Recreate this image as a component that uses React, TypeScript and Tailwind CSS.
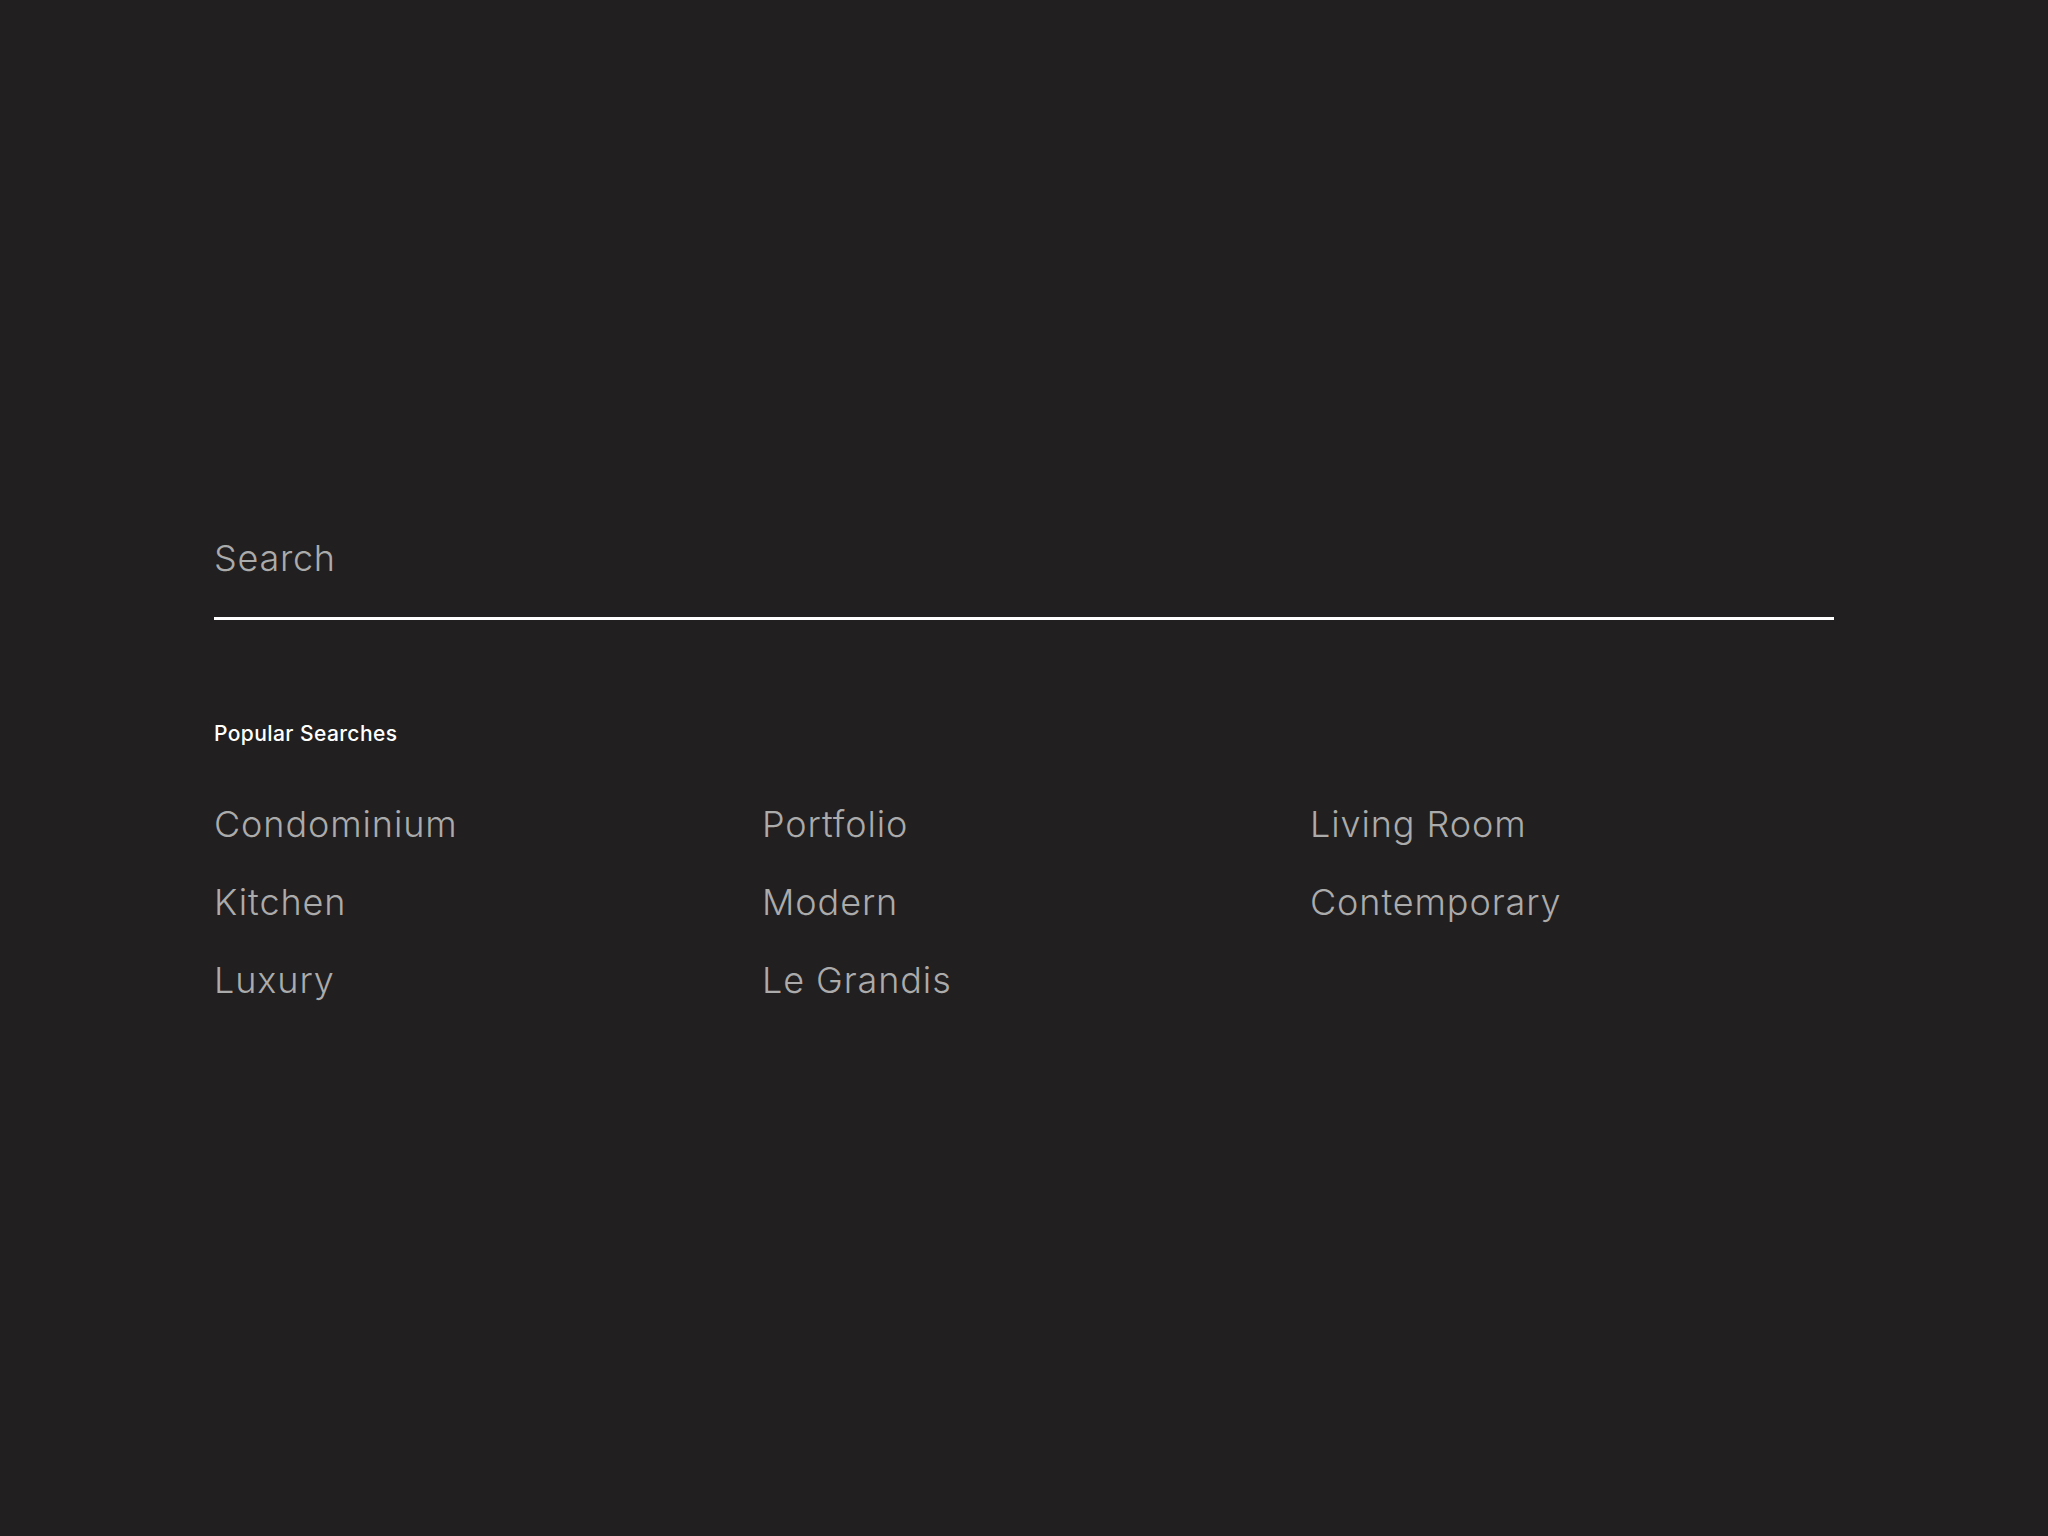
import React from "react";

const items = [
  "Condominium",
  "Portfolio",
  "Living Room",
  "Kitchen",
  "Modern",
  "Contemporary",
  "Luxury",
  "Le Grandis",
];

export default function App() {
  return (
    <div
      className="min-h-[1536px] w-full bg-[#221f20]"
      style={{ fontFamily: "Inter, 'Noto Sans', sans-serif" }}
    >
      <div className="mx-auto w-[1620px] pt-[534px]">
        <div className="border-b-[3px] border-white pb-[35px]">
          <input
            type="text"
            placeholder="Search"
            className="w-full bg-transparent text-[36px] leading-[48px] font-light tracking-[0.02em] text-[#ababab] placeholder:text-[#ababab] outline-none"
          />
        </div>
        <div className="mt-[101px] text-[21px] leading-[26px] font-medium tracking-[0.02em] text-white">
          Popular Searches
        </div>
        <div className="mt-[38px] grid grid-cols-3 gap-x-[24px]">
          {items.map((t) => (
            <a
              key={t}
              href="#"
              className="block text-[36px] leading-[78px] font-light tracking-[0.025em] text-[#ababab]"
            >
              {t}
            </a>
          ))}
        </div>
      </div>
    </div>
  );
}
